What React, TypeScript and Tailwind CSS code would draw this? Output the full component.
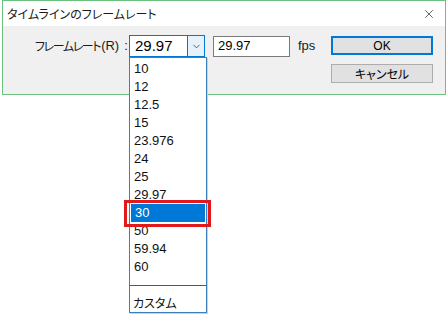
import { X, ChevronDown } from "lucide-react";

const rates = ["10", "12", "12.5", "15", "23.976", "24", "25", "29.97", "30", "50", "59.94", "60"];
const selected = "30";

const jp = "font-['Noto_Sans_CJK_JP',sans-serif] [font-feature-settings:'palt']";
const num = "font-['Liberation_Sans',Arial,sans-serif]";

export default function App() {
  return (
    <div className="relative w-[448px] h-[316px] bg-white overflow-hidden text-black">
      {/* dialog window */}
      <div className="ml-[2px] w-[444px] border border-[#6cc17e] flex flex-col">
        <div className="h-[25px] bg-white flex items-center justify-between pl-[4px] pr-[9px]">
          <span className={`${jp} text-[12px] leading-none text-[#1a1a1a]`}>タイムラインのフレームレート</span>
          <X size={14} strokeWidth={1.2} className="text-[#222]" />
        </div>

        <div className="h-[68px] bg-[#f0f0f0] flex pl-[32px] pt-[9px]">
          <div className="flex items-center h-[22px]">
            <span className="w-[94px] shrink-0 whitespace-nowrap flex items-center text-[#1a1a1a]">
              <span className={`${jp} text-[12px] tracking-[-1.4px]`}>フレームレート</span>
              <span className={`${num} text-[13px] ml-[1px]`}>(R)</span>
              <span className={`${num} text-[13px] ml-[5px]`}>:</span>
            </span>

            {/* combo */}
            <div className="w-[76px] shrink-0 h-[22px] border border-[#0078d7] bg-white flex">
              <span className={`${num} flex-1 text-[15px] leading-[20px] pl-[5px]`}>29.97</span>
              <div className="w-[17px] h-full bg-[#e5f1fb] border-l border-[#0078d7] flex items-center justify-center">
                <ChevronDown size={11} strokeWidth={1.6} className="text-[#333]" />
              </div>
            </div>

            <div className="ml-[8px] w-[77px] shrink-0 h-[21px] border border-[#7a7a7a] bg-white flex items-center">
              <span className={`${num} text-[13px] pl-[4px]`}>29.97</span>
            </div>

            <span className={`${num} ml-[8px] text-[13px] text-[#1a1a1a] w-[33px] shrink-0`}>fps</span>
          </div>

          <div className="flex flex-col gap-[9px] pt-[1px]">
            <button className={`${num} w-[102px] h-[19px] border-2 border-[#0078d7] bg-[#e1e1e1] text-[12px] leading-none`}>
              OK
            </button>
            <button className={`${jp} w-[102px] h-[19px] border border-[#adadad] bg-[#e1e1e1] text-[12px] leading-none`}>
              キャンセル
            </button>
          </div>
        </div>
      </div>

      {/* dropdown list over the page */}
      <div className="absolute left-[129px] top-[57px] w-[78px] h-[256px] border border-[#3d7fbd] bg-white pt-[2px] shadow-[1px_1px_0_#d0d0d0]">
        {rates.map((r) => (
          <div
            key={r}
            className={`${num} h-[18px] pl-[4px] text-[13px] leading-[18px] ${
              r === selected ? "bg-[#0078d7] text-white mx-px pl-[3px]" : "text-[#111]"
            }`}
          >
            {r}
          </div>
        ))}
        <div className="h-[18px] flex items-center">
          <div className="w-full h-px bg-[#555]" />
        </div>
        <div className={`${jp} h-[18px] pl-[3px] text-[12px] leading-[18px] text-[#111]`}>カスタム</div>
      </div>

      {/* red highlight around selection */}
      <div className="absolute left-[124px] top-[200px] w-[87px] h-[27px] border-[3px] border-[#e0191b]" />
    </div>
  );
}
